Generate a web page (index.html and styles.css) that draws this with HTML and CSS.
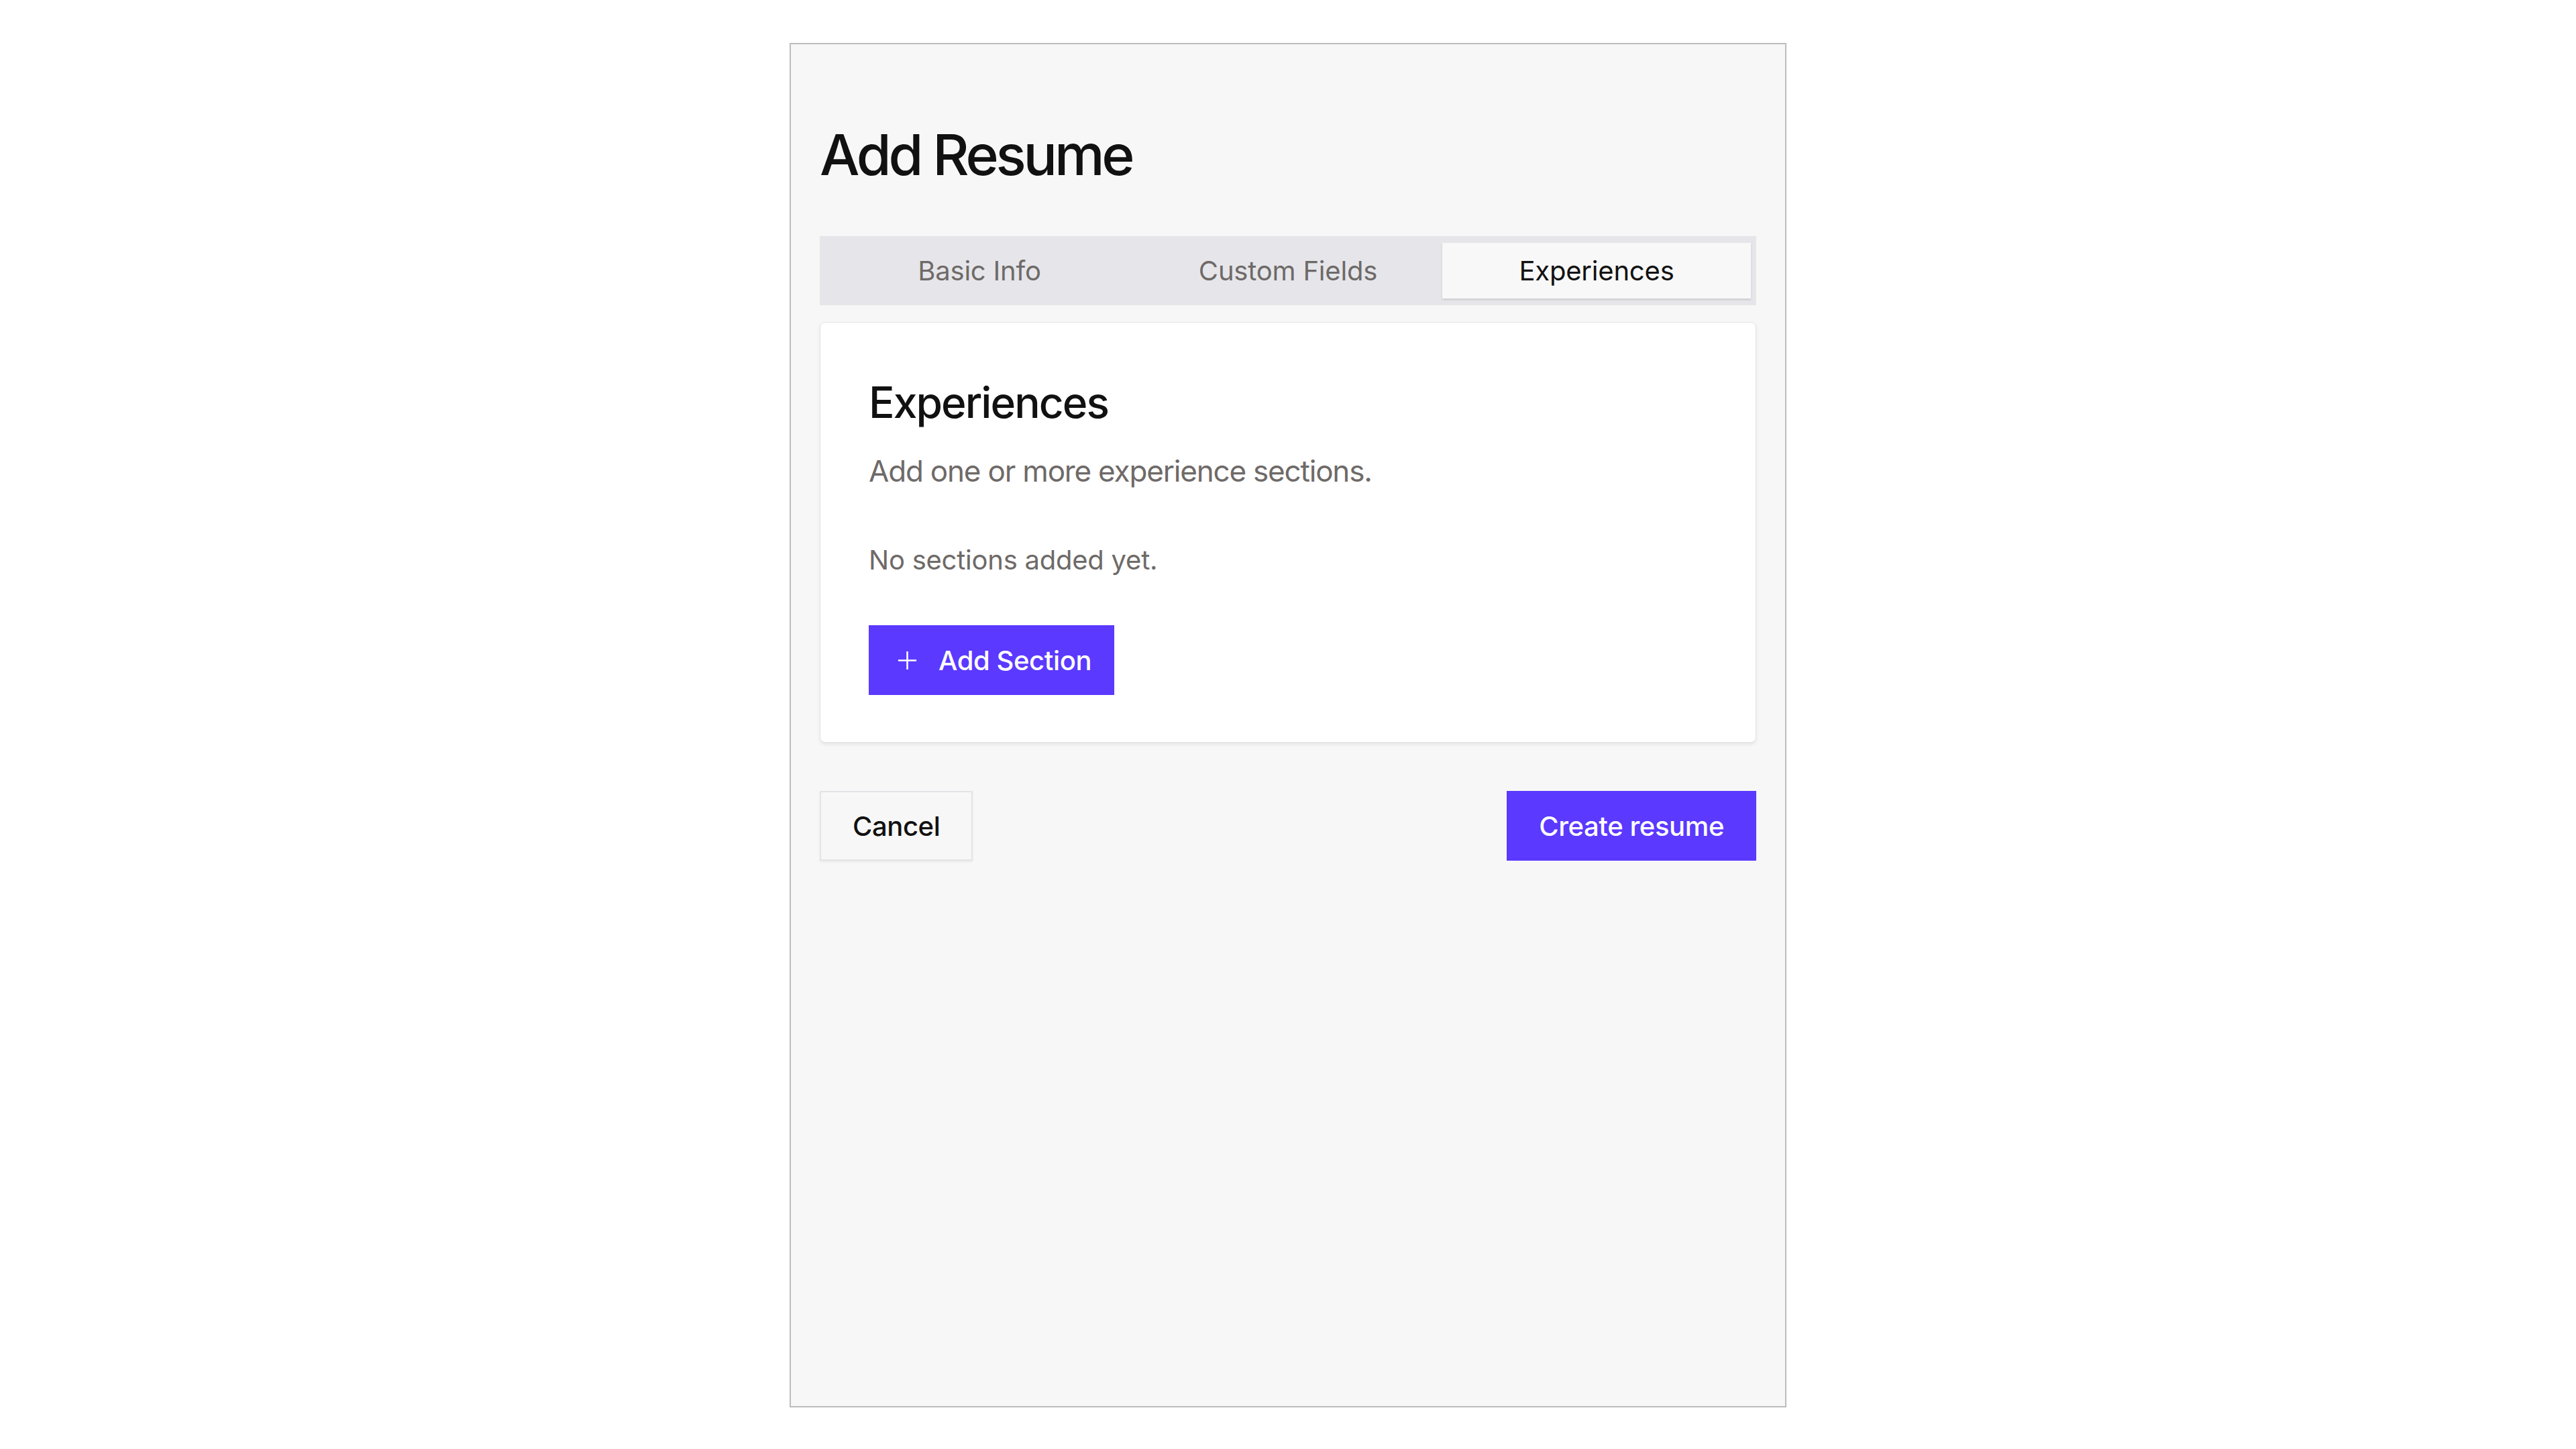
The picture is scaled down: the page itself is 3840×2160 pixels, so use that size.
FILE: index.html
```html
<!DOCTYPE html>
<html lang="en">
<head>
<meta charset="utf-8">
<title>Add Resume</title>
<link rel="stylesheet" href="styles.css">
</head>
<body>
<main class="panel">
  <h1 class="title">Add Resume</h1>
  <nav class="tabs">
    <button class="tab">Basic Info</button>
    <button class="tab">Custom Fields</button>
    <button class="tab tab-active">Experiences</button>
  </nav>
  <section class="card">
    <h2 class="card-title">Experiences</h2>
    <p class="card-sub">Add one or more experience sections.</p>
    <p class="empty">No sections added yet.</p>
    <button class="btn btn-primary btn-add">
      <svg class="plus" viewBox="0 0 32 32" width="31" height="31" aria-hidden="true"><path d="M16 2v28M2 16h28" stroke="#fff" stroke-width="2.6" fill="none"/></svg>
      <span>Add Section</span>
    </button>
  </section>
  <div class="actions">
    <button class="btn btn-secondary">Cancel</button>
    <button class="btn btn-primary btn-create">Create resume</button>
  </div>
</main>
</body>
</html>
```
FILE: styles.css
```css
* { box-sizing: border-box; }
html, body { margin: 0; padding: 0; background: #ffffff; }
body {
  font-family: Inter, "Noto Sans", "Liberation Sans", sans-serif;
  color: #111111;
  display: flex;
  justify-content: center;
  padding-top: 64px;
}
.panel {
  width: 1486px;
  height: 2034px;
  background: #f7f7f7;
  border: 2px solid #bdbdbd;
  padding: 114px 43px 0 43px;
  display: flex;
  flex-direction: column;
}
.title {
  margin: 0;
  font-size: 84px;
  line-height: 102px;
  font-weight: 500;
  letter-spacing: -0.05em;
  color: #111;
}
.tabs {
  margin-top: 70px;
  height: 103px;
  background: #e6e6ea;
  padding: 10px 8px;
  display: grid;
  grid-template-columns: 1fr 1fr 1fr;
}
.tab {
  border: 0;
  background: transparent;
  font-family: inherit;
  font-size: 40px;
  font-weight: 400;
  color: #6e6a68;
  padding: 0;
  letter-spacing: -0.005em;
}
.tab-active {
  background: #f8f8f8;
  color: #111;
  box-shadow: 0 2px 3px rgba(0, 0, 0, 0.12);
}
.card {
  margin-top: 25px;
  background: #ffffff;
  border: 1px solid #e4e4e8;
  border-radius: 8px;
  box-shadow: 0 3px 5px rgba(0, 0, 0, 0.07);
  padding: 80px 72px 70px 72px;
  display: flex;
  flex-direction: column;
  align-items: flex-start;
}
.card-title {
  margin: 0;
  font-size: 64px;
  line-height: 77px;
  font-weight: 500;
  letter-spacing: -0.03em;
  color: #111;
}
.card-sub {
  margin: 31px 0 0 0;
  font-size: 44px;
  line-height: 66px;
  color: #6e6a68;
  letter-spacing: -0.027em;
}
.empty {
  margin: 70px 0 0 0;
  font-size: 40px;
  line-height: 60px;
  color: #6e6a68;
  letter-spacing: -0.006em;
}
.btn {
  border: 0;
  font-family: inherit;
  font-size: 40px;
  font-weight: 500;
  height: 104px;
  display: flex;
  align-items: center;
  cursor: pointer;
}
.btn-primary {
  background: #5b39ff;
  color: #ffffff;
}
.btn-add {
  margin-top: 67px;
  padding: 0 34px 0 42px;
  gap: 31px;
  letter-spacing: -0.01em;
}
.plus { display: block; }
.actions {
  margin-top: 72px;
  display: flex;
  justify-content: space-between;
}
.btn-secondary {
  background: #f7f7f7;
  color: #111;
  border: 2px solid #e4e4e8;
  box-shadow: 0 2px 3px rgba(0, 0, 0, 0.06);
  padding: 0 47px;
  letter-spacing: -0.01em;
}
.btn-create {
  padding: 0 48px;
  letter-spacing: -0.01em;
}
```
